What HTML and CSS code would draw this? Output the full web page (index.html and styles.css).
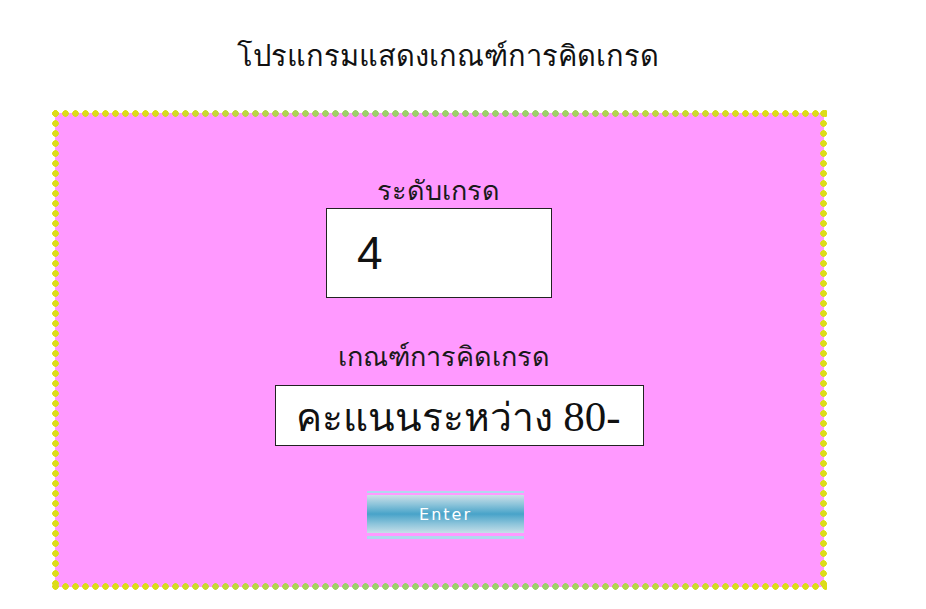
FILE: index.html
```html
<!DOCTYPE html>
<html lang="th">
<head>
<meta charset="utf-8">
<title>โปรแกรมแสดงเกณฑ์การคิดเกรด</title>
<link rel="stylesheet" href="styles.css">
</head>
<body>
<div class="page">
  <h1 class="title">โปรแกรมแสดงเกณฑ์การคิดเกรด</h1>
  <div class="frame">
    <div class="label label-grade">ระดับเกรด</div>
    <div class="field field-grade">4</div>
    <div class="label label-crit">เกณฑ์การคิดเกรด</div>
    <div class="field field-crit"><span class="th">คะแนนระหว่าง</span> <span class="num">80-</span></div>
    <button class="enter" type="button">Enter</button>
  </div>
</div>
</body>
</html>
```
FILE: styles.css
```css
html, body {
  margin: 0;
  padding: 0;
  background: #ffffff;
}
body {
  font-family: "Noto Sans", "DejaVu Sans", sans-serif;
  color: #111;
}
.page {
  width: 926px;
  height: 609px;
  overflow: hidden;
}
.title {
  margin: 31px 0 0 0;
  width: 895px;
  text-align: center;
  font-weight: normal;
  font-size: 29px;
  line-height: 48px;
  letter-spacing: 0;
}
.frame {
  position: relative;
  margin: 34px 0 0 55px;
  width: 769px;
  height: 474px;
  background: #ff99ff;
  display: flex;
  flex-direction: column;
  align-items: center;
  box-sizing: border-box;
  padding-top: 59px;
}
.frame::before {
  content: "";
  position: absolute;
  left: -3px;
  top: -3px;
  right: -3px;
  bottom: -3px;
  background: linear-gradient(90deg, #dcdc18 0%, #dcdc18 12%, #9ccf6a 38%, #9ccf6a 64%, #dcdc18 90%, #dcdc18 100%);
  -webkit-mask:
    radial-gradient(circle 3.4px at 3.5px 3.5px, #000 90%, transparent 100%) top left / 10px 7px repeat-x,
    radial-gradient(circle 3.4px at 3.5px 3.5px, #000 90%, transparent 100%) bottom left / 10px 7px repeat-x,
    radial-gradient(circle 3.4px at 3.5px 3.5px, #000 90%, transparent 100%) top left / 7px 10px repeat-y,
    radial-gradient(circle 3.4px at 3.5px 3.5px, #000 90%, transparent 100%) top right / 7px 10px repeat-y;
  mask:
    radial-gradient(circle 3.4px at 3.5px 3.5px, #000 90%, transparent 100%) top left / 10px 7px repeat-x,
    radial-gradient(circle 3.4px at 3.5px 3.5px, #000 90%, transparent 100%) bottom left / 10px 7px repeat-x,
    radial-gradient(circle 3.4px at 3.5px 3.5px, #000 90%, transparent 100%) top left / 7px 10px repeat-y,
    radial-gradient(circle 3.4px at 3.5px 3.5px, #000 90%, transparent 100%) top right / 7px 10px repeat-y;
  pointer-events: none;
}
.label {
  font-size: 27px;
  line-height: 36px;
  color: #1a1a1a;
}
.label-grade {
  margin-left: -2px;
}
.label-crit {
  margin-top: 40px;
  margin-left: 8px;
}
.field {
  background: #ffffff;
  border: 1px solid #222;
  box-sizing: border-box;
  overflow: hidden;
  white-space: nowrap;
}
.field-grade {
  width: 226px;
  height: 90px;
  margin-left: -1px;
  padding-left: 30px;
  font-family: "Liberation Sans", Arial, sans-serif;
  font-size: 46px;
  line-height: 88px;
  color: #111;
}
.field-crit {
  width: 369px;
  height: 61px;
  margin-left: 40px;
  margin-top: 11px;
  padding-left: 20px;
  font-size: 39px;
  line-height: 60px;
  color: #111;
}
.field-crit .num {
  font-family: "Liberation Serif", "Times New Roman", serif;
  font-size: 43px;
}
.enter {
  margin-top: 45px;
  margin-left: 12px;
  width: 157px;
  height: 48px;
  padding: 0;
  border: 0;
  border-top: 2px solid #b0d8ee;
  border-bottom: 3px solid #b0d8ee;
  background:
    linear-gradient(180deg, #cde0e8 0%, #8cc4da 25%, #48a3c9 50%, #8ac3da 75%, #c6dfe9 100%) content-box;
  background-clip: content-box;
  box-sizing: border-box;
  padding-top: 2px;
  padding-bottom: 3px;
  color: #ffffff;
  font-family: "DejaVu Sans", sans-serif;
  font-size: 16px;
  letter-spacing: 2px;
  cursor: pointer;
}
```
